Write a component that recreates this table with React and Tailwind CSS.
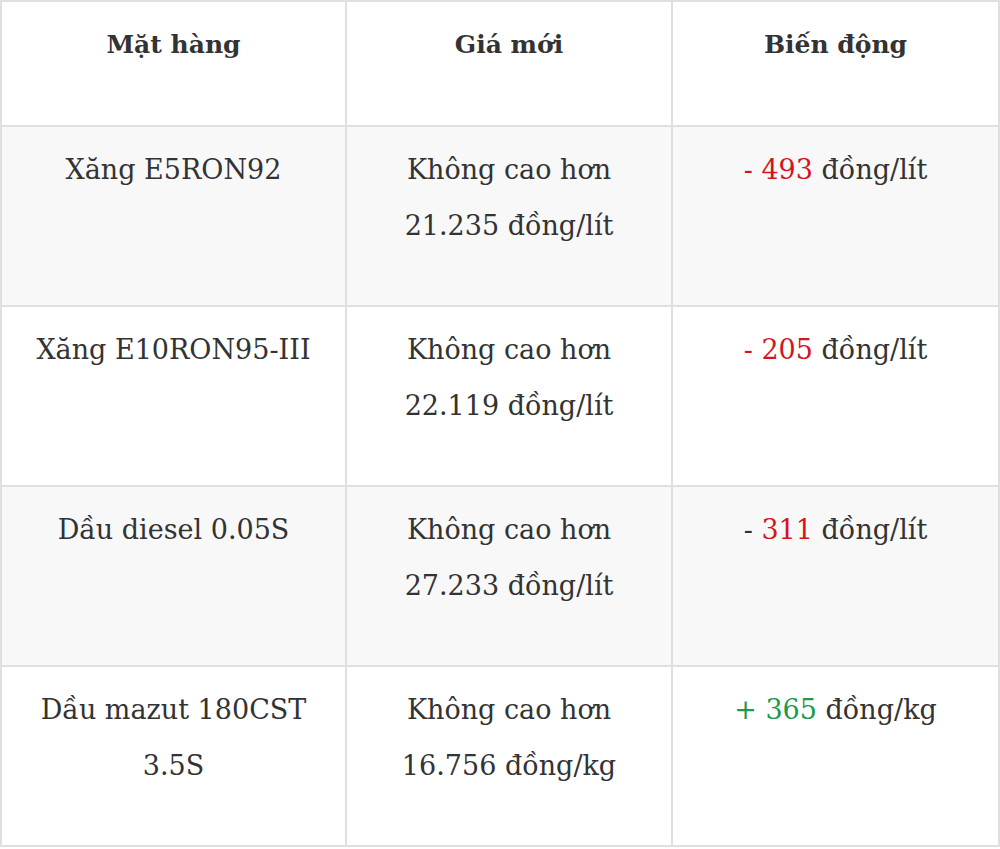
import React from "react";

const rows = [
  {
    name: ["Xăng E5RON92"],
    price: ["Không cao hơn", "21.235 đồng/lít"],
    sign: "-",
    signRed: true,
    delta: "493",
    unit: "đồng/lít",
    tone: "red",
  },
  {
    name: ["Xăng E10RON95-III"],
    price: ["Không cao hơn", "22.119 đồng/lít"],
    sign: "-",
    signRed: true,
    delta: "205",
    unit: "đồng/lít",
    tone: "red",
  },
  {
    name: ["Dầu diesel 0.05S"],
    price: ["Không cao hơn", "27.233 đồng/lít"],
    sign: "-",
    signRed: false,
    delta: "311",
    unit: "đồng/lít",
    tone: "red",
  },
  {
    name: ["Dầu mazut 180CST", "3.5S"],
    price: ["Không cao hơn", "16.756 đồng/kg"],
    sign: "+",
    signRed: true,
    delta: "365",
    unit: "đồng/kg",
    tone: "green",
  },
];

const Cell = ({ children }) => (
  <td className="border-2 border-[#e0e0e0] px-2 pt-[15px] pb-[51px] align-top text-center">
    {children}
  </td>
);

const Head = ({ children }) => (
  <th className="border-2 border-[#e0e0e0] px-2 pt-[15px] pb-[52px] align-top text-center font-bold text-[25px]">
    {children}
  </th>
);

export default function App() {
  return (
    <div
      className="w-[1000px] h-[849px] bg-white text-[#333] text-[27px] leading-[56px]"
      style={{ fontFamily: '"DejaVu Serif", "Liberation Serif", serif' }}
    >
      <table className="w-[1000px] border-collapse table-fixed">
        <colgroup>
          <col className="w-[345px]" />
          <col className="w-[326px]" />
          <col />
        </colgroup>
        <thead>
          <tr className="bg-white">
            <Head>Mặt hàng</Head>
            <Head>Giá mới</Head>
            <Head>Biến động</Head>
          </tr>
        </thead>
        <tbody>
          {rows.map((r, i) => {
            const color = r.tone === "red" ? "text-[#d6141f]" : "text-[#1c9b4c]";
            return (
              <tr key={i} className={i % 2 === 0 ? "bg-[#f8f8f8]" : "bg-white"}>
                <Cell>
                  {r.name.map((l) => (
                    <div key={l}>{l}</div>
                  ))}
                </Cell>
                <Cell>
                  {r.price.map((l) => (
                    <div key={l}>{l}</div>
                  ))}
                </Cell>
                <Cell>
                  <span className={r.signRed ? color : ""}>{r.sign} </span>
                  <span className={color}>{r.delta}</span> {r.unit}
                </Cell>
              </tr>
            );
          })}
        </tbody>
      </table>
    </div>
  );
}
